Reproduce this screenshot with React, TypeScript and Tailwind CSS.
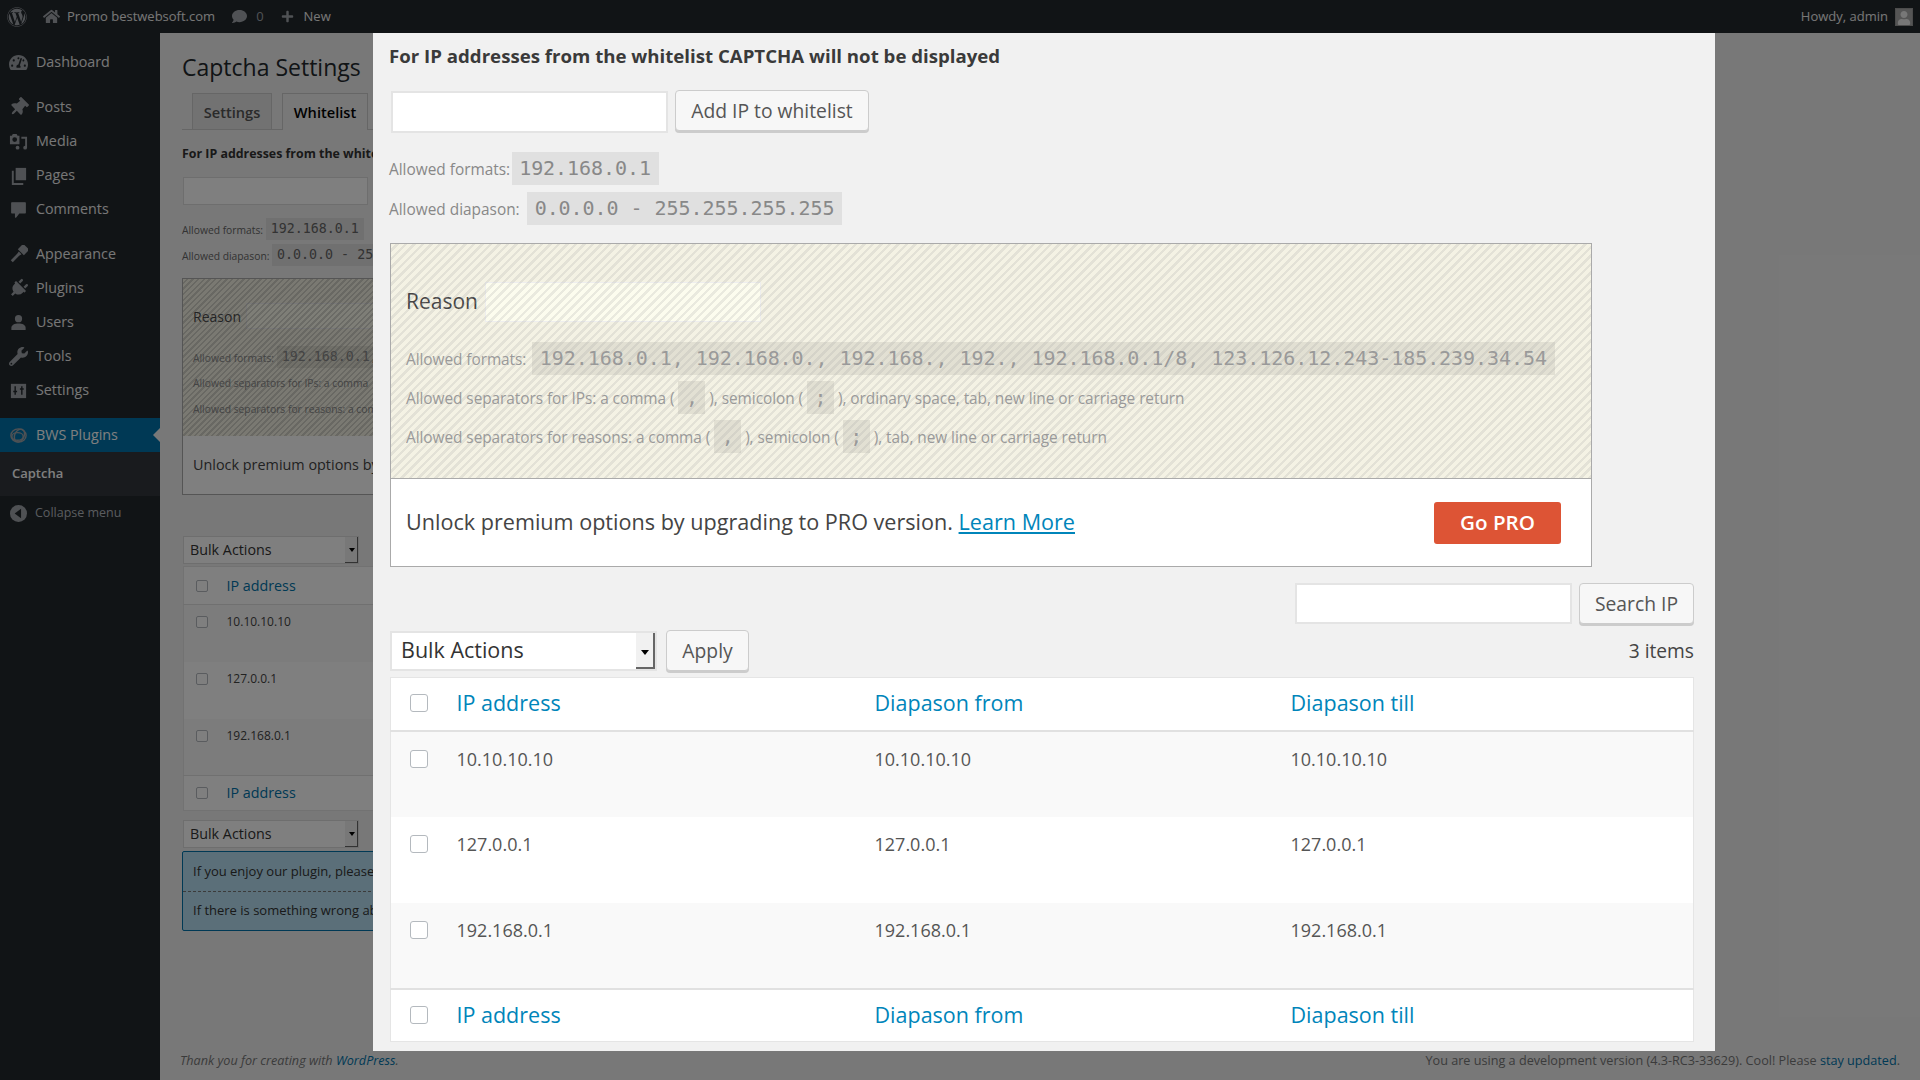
import type { ReactNode } from "react";
import {
  FaComment,
  FaHome,
  FaPlug,
  FaPlus,
  FaTachometerAlt,
  FaThumbtack,
  FaUser,
  FaWordpress,
  FaWrench,
} from "react-icons/fa";

const iconClass = "w-[19px] h-[19px] shrink-0 text-[#9ea3a8]";

function Svg({ children }: { children: ReactNode }) {
  return (
    <svg viewBox="0 0 20 20" className={iconClass} fill="currentColor">
      {children}
    </svg>
  );
}

function MediaIcon() {
  return (
    <Svg>
      <path
        fillRule="evenodd"
        d="M1 4h2l1-2h4l1 2h2v9H1zM6 5.500a2.500 2.500 0 1 0 0 5 2.500 2.500 0 0 0 0-5z"
      />
      <path d="M13 5h6v11.500a2 2 0 1 1-2-2V7h-4z" />
      <circle cx="9" cy="16.500" r="2" />
    </Svg>
  );
}

function PagesIcon() {
  return (
    <Svg>
      <path d="M7 2h11v13H7z" />
      <path d="M3 5h2v13h10v2H3z" />
    </Svg>
  );
}

function CommentIcon() {
  return (
    <Svg>
      <path
        d="M3 3h14v10.500h-6.500L7 18v-4.500H3z"
        stroke="currentColor"
        strokeWidth="1.500"
        strokeLinejoin="round"
      />
    </Svg>
  );
}

function BrushIcon() {
  return (
    <Svg>
      <g transform="rotate(45 10 10)">
        <path d="M5.500 -1.500h9v8h-9z" />
        <path d="M8 7.500h4l-.5 3v9.500h-3v-9.500z" />
      </g>
    </Svg>
  );
}

function UserIcon() {
  return (
    <Svg>
      <circle cx="10" cy="6" r="3.800" />
      <path d="M2.500 18v-2.500c0-3 3.500-4.500 7.500-4.500s7.500 1.500 7.500 4.500V18z" />
    </Svg>
  );
}

function SettingsIcon() {
  return (
    <svg viewBox="0 0 20 20" className={iconClass}>
      <rect x="2" y="3" width="16" height="15" fill="currentColor" />
      <path d="M6.500 5.500v9M4.500 11h4M13.500 5.500v9M11.500 8.500h4" stroke="#23282d" strokeWidth="1.500" />
    </svg>
  );
}

function BwsIcon() {
  return (
    <svg viewBox="0 0 20 20" className={iconClass} fill="none" stroke="currentColor" strokeWidth="1.500">
      <ellipse cx="10" cy="10" rx="8" ry="7" />
      <ellipse cx="11" cy="10" rx="5" ry="7" transform="rotate(25 11 10)" />
      <ellipse cx="9" cy="11" rx="6" ry="4" />
    </svg>
  );
}

function CollapseIcon() {
  return (
    <svg viewBox="0 0 20 20" className="w-[17px] h-[17px] shrink-0 text-[#9ea3a8]">
      <circle cx="10" cy="10" r="10" fill="currentColor" />
      <path d="M13 4.500v11L5.500 10z" fill="#23282d" />
    </svg>
  );
}

const menuGroups: { label: string; icon: ReactNode }[][] = [
  [{ label: "Dashboard", icon: <FaTachometerAlt className={iconClass} /> }],
  [
    { label: "Posts", icon: <FaThumbtack className={`${iconClass} rotate-45`} /> },
    { label: "Media", icon: <MediaIcon /> },
    { label: "Pages", icon: <PagesIcon /> },
    { label: "Comments", icon: <CommentIcon /> },
  ],
  [
    { label: "Appearance", icon: <BrushIcon /> },
    { label: "Plugins", icon: <FaPlug className={`${iconClass} rotate-45`} /> },
    { label: "Users", icon: <UserIcon /> },
    { label: "Tools", icon: <FaWrench className={iconClass} /> },
    { label: "Settings", icon: <SettingsIcon /> },
  ],
];

const ipRows = ["10.10.10.10", "127.0.0.1", "192.168.0.1"];

function Code({ children, className = "" }: { children: ReactNode; className?: string }) {
  return (
    <code className={`inline-block bg-black/[0.07] font-['DejaVu_Sans_Mono',monospace] ${className}`}>
      {children}
    </code>
  );
}

function BigCode({ children, className = "" }: { children: ReactNode; className?: string }) {
  return (
    <Code className={`h-[33px] px-[7.5px] text-[20px] leading-[33px] tracking-[-0.05px] align-baseline ${className}`}>
      {children}
    </Code>
  );
}

function SmallCode({ children }: { children: ReactNode }) {
  return (
    <Code className="h-[22px] px-[5px] text-[13.300px] leading-[22px] align-[1px]">{children}</Code>
  );
}

function Check({ big }: { big?: boolean }) {
  return (
    <input
      type="checkbox"
      className={
        big
          ? "block appearance-none w-[18px] h-[18px] rounded-[3px] border border-[#b4b9be] bg-white"
          : "block appearance-none w-[12px] h-[12px] rounded-[2px] border border-[#b4b9be] bg-white"
      }
    />
  );
}

function Select({ big }: { big?: boolean }) {
  return big ? (
    <div className="flex w-[267px] h-[40px] border-2 border-[#e4e4e4] bg-white items-center">
      <span className="flex-1 pl-[9px] text-[21.500px] text-[#333]">Bulk Actions</span>
      <span className="relative w-[19px] h-full bg-[#f1f1f1] border-r-2 border-b-2 border-[#666]">
        <span className="absolute left-[5px] top-[17px] border-x-[4px] border-t-[5px] border-x-transparent border-t-black" />
      </span>
    </div>
  ) : (
    <div className="flex w-[176px] h-[28px] border border-[#ddd] bg-white items-center">
      <span className="flex-1 pl-[6px] text-[14.300px] text-[#333]">Bulk Actions</span>
      <span className="relative w-[13px] h-full bg-[#f1f1f1] border-r border-b border-[#666]">
        <span className="absolute left-[4px] top-[11px] border-x-[3px] border-t-[4px] border-x-transparent border-t-black" />
      </span>
    </div>
  );
}

function Sidebar() {
  return (
    <aside className="w-[160px] shrink-0 bg-[#23282d] text-[14.300px] text-[#eee]">
      <div className="pt-[12px]">
        {menuGroups.map((group, i) => (
          <div key={i} className="mb-[11px]">
            {group.map((item) => (
              <div key={item.label} className="flex items-center h-[34px] pl-[9px] gap-[8px]">
                {item.icon}
                <span>{item.label}</span>
              </div>
            ))}
          </div>
        ))}
        <div className="relative flex items-center h-[34px] pl-[9px] gap-[8px] bg-[#0073aa] text-white">
          <BwsIcon />
          <span>BWS Plugins</span>
          <span className="absolute right-0 top-[10px] border-y-[7px] border-r-[7px] border-y-transparent border-r-[#f1f1f1]" />
        </div>
        <div className="flex items-center h-[44px] pl-[12px] bg-[#32373c] text-[13px] font-semibold text-white">
          Captcha
        </div>
        <div className="flex items-center h-[34px] pl-[10px] gap-[8px] text-[12.500px] text-[#b4b9be]">
          <CollapseIcon />
          <span>Collapse menu</span>
        </div>
      </div>
    </aside>
  );
}

function BackgroundPage() {
  return (
    <main className="relative flex flex-col flex-1 h-[1047px] text-[#444]">
      <div className="w-[1000px] overflow-hidden pl-[22px]">
        <h1 className="mt-[20px] text-[23px] leading-[29px] text-[#23282d]">Captcha Settings</h1>
        <div className="flex mt-[11px] h-[37px] gap-[10px] pl-[10px] border-b border-[#ccc]">
          <div className="w-[80px] h-[37px] bg-[#e4e4e4] border border-[#ccc] text-center text-[14.600px] leading-[36px] font-semibold text-[#555]">
            Settings
          </div>
          <div className="w-[86px] h-[37px] bg-[#f1f1f1] border border-[#ccc] border-b-0 text-center text-[14.600px] leading-[36px] font-semibold text-black">
            Whitelist
          </div>
        </div>
        <p className="mt-[15px] text-[12.400px] leading-[18px] font-bold text-[#333]">
          For IP addresses from the whitelist CAPTCHA will not be displayed
        </p>
        <div className="mt-[14px] ml-[1px] w-[185px] h-[28px] bg-white border border-[#ddd]" />
        <div className="mt-[13px] h-[22px] text-[10.300px] leading-[22px] text-[#666]">
          Allowed formats: <SmallCode>192.168.0.1</SmallCode>
        </div>
        <div className="mt-[4px] h-[22px] text-[10.300px] leading-[22px] text-[#666]">
          Allowed diapason: <SmallCode>0.0.0.0 - 255.255.255.255</SmallCode>
        </div>
        <div className="mt-[12px] w-[801px] border border-[#aaa]">
          <div className="relative h-[157px] bg-[#f4f2e4] pl-[10px] pt-[24px]">
            <div className="flex items-center h-[26px] text-[14px]">
              Reason <span className="ml-[5px] w-[184px] h-[26px] bg-[#fcfcee] border border-[#eee]" />
            </div>
            <div className="mt-[17px] h-[22px] text-[10.300px] leading-[22px] text-[#888]">
              Allowed formats: <SmallCode>192.168.0.1, 192.168.0., 192.168., 192., 192.168.0.1/8</SmallCode>
            </div>
            <div className="mt-[4px] text-[10.300px] leading-[22px] text-[#888]">Allowed separators for IPs: a comma</div>
            <div className="mt-[4px] text-[10.300px] leading-[22px] text-[#888]">Allowed separators for reasons: a comma</div>
            <div className="absolute inset-0 bg-[repeating-linear-gradient(135deg,rgba(0,0,0,0)_0,rgba(0,0,0,0)_2.300px,rgba(130,130,130,0.3)_2.300px,rgba(130,130,130,0.3)_4px)]" />
          </div>
          <div className="flex items-center h-[58px] pl-[10px] bg-white text-[14.400px]">
            Unlock premium options by upgrading to PRO version.
          </div>
        </div>
        <div className="mt-[41px] ml-[1px]">
          <Select />
        </div>
        <table className="mt-[2px] ml-[1px] w-[800px] table-fixed bg-white border border-[#e5e5e5] text-[12px] border-collapse">
          <tbody>
            <tr className="h-[38px] border-b border-[#e1e1e1]">
              <td className="w-[43px] pl-[12px]">
                <Check />
              </td>
              <td className="text-[14.300px] text-[#0073aa]">IP address</td>
            </tr>
            {ipRows.map((ip, i) => (
              <tr key={ip} className={i % 2 === 0 ? "h-[57px] bg-[#f9f9f9] align-top" : "h-[57px] bg-white align-top"}>
                <td className="pl-[12px] pt-[11px]">
                  <Check />
                </td>
                <td className="pt-[8px]">{ip}</td>
              </tr>
            ))}
            <tr className="h-[35px] border-t border-[#e1e1e1]">
              <td className="pl-[12px]">
                <Check />
              </td>
              <td className="text-[14.300px] text-[#0073aa]">IP address</td>
            </tr>
          </tbody>
        </table>
        <div className="mt-[9px] ml-[1px]">
          <Select />
        </div>
        <div className="mt-[3px] w-[800px] bg-[#b6dff2] border border-[#0073aa] rounded-[2px] text-[13px] text-[#333]">
          <div className="h-[40px] pl-[10px] leading-[38px] border-b border-dashed border-[#777]">
            If you enjoy our plugin, please give it 5 stars on WordPress
          </div>
          <div className="h-[38px] pl-[10px] leading-[37px]">If there is something wrong about it, please contact us</div>
        </div>
      </div>
      <footer className="flex justify-between mt-auto mb-[11px] pl-[20px] pr-[20px] text-[12.650px] leading-[18px] text-[#777]">
        <span className="italic">
          Thank you for creating with <span className="text-[#0073aa]">WordPress</span>.
        </span>
        <span>
          You are using a development version (4.3-RC3-33629). Cool! Please{" "}
          <span className="text-[#0073aa]">stay updated</span>.
        </span>
      </footer>
    </main>
  );
}

function ModalButton({ children, className = "" }: { children: ReactNode; className?: string }) {
  return (
    <button className={`h-[41px] pt-[1px] bg-[#f7f7f7] border border-[#ccc] rounded-[4px] shadow-[0_2px_0_#ccc] text-[19.300px] text-[#555] ${className}`}>
      {children}
    </button>
  );
}

function HeadRow({ className, cellClass = "" }: { className: string; cellClass?: string }) {
  return (
    <tr className={className}>
      <td className={`pl-[19px] ${cellClass}`}>
        <Check big />
      </td>
      <td className={`text-[#0085ba] ${cellClass}`}>IP address</td>
      <td className={`text-[#0085ba] ${cellClass}`}>Diapason from</td>
      <td className={`text-[#0085ba] ${cellClass}`}>Diapason till</td>
    </tr>
  );
}

function Modal() {
  return (
    <div className="absolute left-[373px] top-[33px] w-[1342px] h-[1018px] overflow-hidden bg-[#f1f1f1] pl-[16px] pr-[21px] pt-[10px] text-[#444]">
      <h2 className="text-[18.650px] leading-[26px] font-bold text-[#3a3a3a]">
        For IP addresses from the whitelist CAPTCHA will not be displayed
      </h2>
      <div className="flex items-start mt-[21px] ml-[2px] gap-[7px]">
        <div className="w-[277px] h-[42px] mt-[1px] bg-white border-2 border-[#e4e4e4]" />
        <ModalButton className="w-[194px]">Add IP to whitelist</ModalButton>
      </div>
      <div className="mt-[19px] h-[33px] text-[15.400px] leading-[33px] text-[#888]">
        Allowed formats: <BigCode className="-ml-[2.500px]">192.168.0.1</BigCode>
      </div>
      <div className="mt-[7px] h-[33px] text-[15.400px] leading-[33px] text-[#888]">
        Allowed diapason: <BigCode className="ml-[3.500px]">0.0.0.0 - 255.255.255.255</BigCode>
      </div>

      <div className="mt-[18px] ml-[1px] w-[1202px] border border-[#aaa]">
        <div className="relative h-[234px] bg-[#f4f2e4] pl-[15px] pt-[38px] text-[15.400px] tracking-[-0.05px] text-[#999]">
          <div className="flex items-center h-[40px] text-[21px] tracking-normal text-[#444]">
            Reason <span className="ml-[7px] w-[276px] h-[40px] bg-[#fcfcee] border border-[#eee]" />
          </div>
          <div className="mt-[20px] h-[33px] leading-[33px]">
            Allowed formats:{" "}
            <BigCode className="ml-[2px]">
              192.168.0.1, 192.168.0., 192.168., 192., 192.168.0.1/8, 123.126.12.243-185.239.34.54
            </BigCode>
          </div>
          <div className="mt-[6px] h-[33px] leading-[33px]">
            Allowed separators for IPs: a comma ( <BigCode>,</BigCode> ), semicolon ( <BigCode>;</BigCode> ), ordinary
            space, tab, new line or carriage return
          </div>
          <div className="mt-[6px] h-[33px] leading-[33px]">
            Allowed separators for reasons: a comma ( <BigCode>,</BigCode> ), semicolon ( <BigCode>;</BigCode> ), tab,
            new line or carriage return
          </div>
          <div className="absolute inset-0 bg-[repeating-linear-gradient(135deg,rgba(0,0,0,0)_0,rgba(0,0,0,0)_3.500px,rgba(160,160,160,0.2)_3.500px,rgba(160,160,160,0.2)_6px)]" />
        </div>
        <div className="flex items-center justify-between h-[88px] pl-[15px] pr-[30px] bg-white border-t border-[#aaa] text-[21.600px]">
          <span>
            Unlock premium options by upgrading to PRO version.{" "}
            <span className="text-[#0085ba] underline">Learn More</span>
          </span>
          <span className="flex items-center justify-center w-[127px] h-[42px] rounded-[3px] bg-[#dd5435] text-[20.600px] font-semibold text-white">
            Go PRO
          </span>
        </div>
      </div>

      <div className="flex justify-end items-start mt-[16px] gap-[7px]">
        <div className="w-[277px] h-[41px] bg-white border-2 border-[#e4e4e4]" />
        <ModalButton className="w-[115px]">Search IP</ModalButton>
      </div>
      <div className="flex items-center mt-[6px] ml-[1px] gap-[9px]">
        <Select big />
        <ModalButton className="w-[83px] h-[40px]">Apply</ModalButton>
        <span className="ml-auto pt-[1px] text-[19.200px] text-[#444]">3 items</span>
      </div>

      <table className="mt-[6px] ml-[1px] w-[1304px] table-fixed bg-white border border-[#e5e5e5] text-[21.500px] border-collapse">
        <colgroup>
          <col className="w-[66px]" />
          <col className="w-[418px]" />
          <col className="w-[416px]" />
          <col />
        </colgroup>
        <tbody>
          <HeadRow className="h-[53px] border-b-2 border-[#e1e1e1]" cellClass="pb-[2px]" />
          {ipRows.map((ip, i) => (
            <tr key={ip} className={i % 2 === 0 ? "h-[86px] bg-[#f9f9f9] align-top text-[18px] text-[#555]" : "h-[86px] bg-white align-top text-[18px] text-[#555]"}>
              <td className="pl-[19px] pt-[18px]">
                <Check big />
              </td>
              <td className="pt-[14px]">{ip}</td>
              <td className="pt-[14px]">{ip}</td>
              <td className="pt-[14px]">{ip}</td>
            </tr>
          ))}
          <HeadRow className="h-[53px] border-t-2 border-[#e1e1e1]" />
        </tbody>
      </table>
    </div>
  );
}

export default function App() {
  return (
    <div className="relative w-[1920px] h-[1080px] overflow-hidden bg-[#f1f1f1] font-['Open_Sans',sans-serif]">
      <header className="flex items-center h-[33px] bg-[#23282d] text-[13px] text-[#eee]">
        <FaWordpress className="ml-[7px] w-[20px] h-[20px] text-[#a0a5aa]" />
        <FaHome className="ml-[16px] w-[17px] h-[17px] text-[#a0a5aa]" />
        <span className="ml-[7px]">Promo bestwebsoft.com</span>
        <FaComment className="ml-[17px] w-[15px] h-[15px] text-[#a0a5aa]" />
        <span className="ml-[9px] text-[#a0a5aa]">0</span>
        <FaPlus className="ml-[17px] w-[13px] h-[13px] text-[#a0a5aa]" />
        <span className="ml-[10px]">New</span>
        <span className="ml-auto">Howdy, admin</span>
        <span className="flex items-end justify-center ml-[7px] mr-[7px] w-[18px] h-[18px] bg-[#aaa] border border-[#999] overflow-hidden">
          <FaUser className="w-[14px] h-[14px] text-[#eee]" />
        </span>
      </header>
      <div className="flex">
        <Sidebar />
        <BackgroundPage />
      </div>
      <div className="absolute inset-0 bg-black/50" />
      <Modal />
    </div>
  );
}
